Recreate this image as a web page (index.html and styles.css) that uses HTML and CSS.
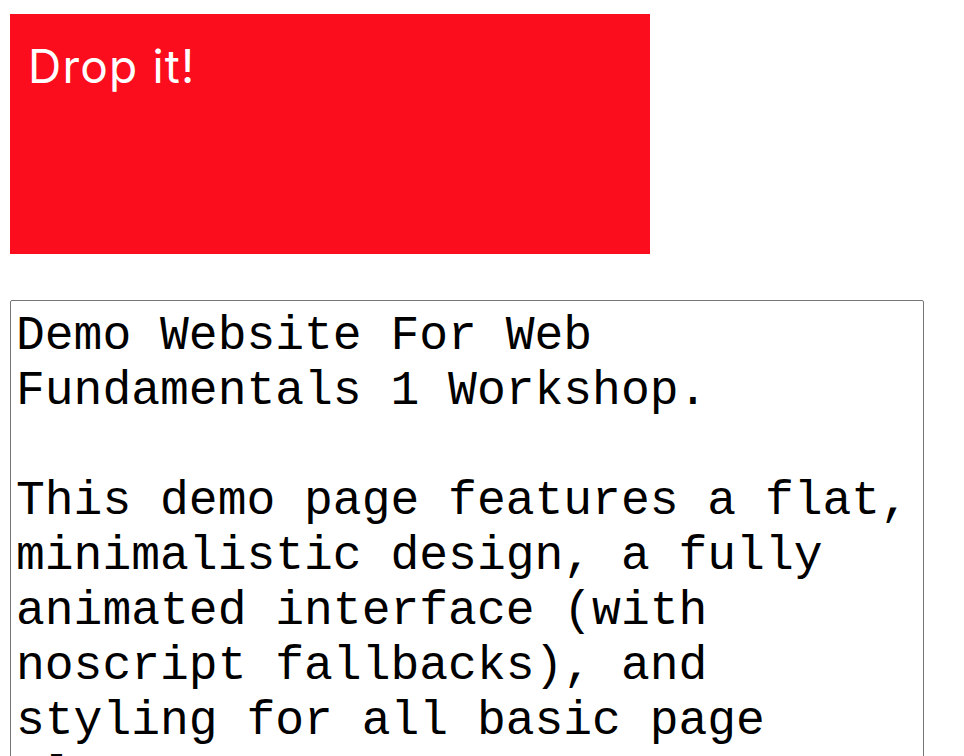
FILE: index.html
```html
<!DOCTYPE html>
<html lang="en">
<head>
<meta charset="utf-8">
<title>Drop it!</title>
<link rel="stylesheet" href="styles.css">
</head>
<body>
<main class="page">
  <div class="dropzone">
    <p class="dropzone-label">Drop it!</p>
  </div>
  <textarea class="notes" spellcheck="false">Demo Website For Web Fundamentals 1 Workshop.

This demo page features a flat, minimalistic design, a fully animated interface (with noscript fallbacks), and styling for all basic page elements.</textarea>
</main>
</body>
</html>
```

FILE: styles.css
```css
html, body {
  margin: 0;
  padding: 0;
  background: #ffffff;
  overflow: hidden;
}

.page {
  display: flex;
  flex-direction: column;
  align-items: flex-start;
  gap: 46px;
  padding: 14px 10px 0 10px;
}

.dropzone {
  box-sizing: border-box;
  width: 640px;
  height: 240px;
  background: #fc0d1d;
  padding: 29px 18px;
}

.dropzone-label {
  margin: 0;
  color: #ffffff;
  font-family: Inter, "Liberation Sans", Arial, sans-serif;
  font-size: 46px;
  line-height: 1;
  letter-spacing: 1.2px;
}

.notes {
  box-sizing: border-box;
  display: block;
  width: 914px;
  height: 520px;
  margin: 0;
  padding: 8px 2px 2px 5px;
  border: 1px solid #767676;
  border-radius: 2px;
  resize: none;
  overflow: hidden;
  color: #000000;
  background: #ffffff;
  font-family: "Courier New", "Nimbus Mono PS", FreeMono, "Liberation Mono", monospace;
  font-size: 48px;
  line-height: 55px;
}
```
